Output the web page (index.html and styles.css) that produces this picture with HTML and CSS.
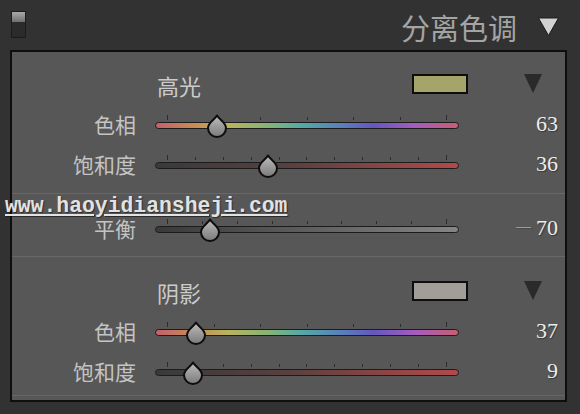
FILE: index.html
```html
<!DOCTYPE html>
<html lang="zh-CN">
<head>
    <meta charset="UTF-8">
    <meta name="viewport" content="width=device-width, initial-scale=1.0">
    <title>分离色调</title>
    <link rel="stylesheet" href="styles.css">
</head>
<body>

<div class="topbar">
    <div class="toggle"></div>
    <div class="title">分离色调</div>
    <svg class="title-arrow" width="23" height="21" viewBox="0 0 23 21"><polygon points="1.5,2 21.5,2 11.5,19.5" /></svg>
</div>

<div class="panel">
    <!-- highlights -->
    <div class="section first">
        <div class="group-head">
            <span class="group-name">高光</span>
            <span class="swatch swatch-high"></span>
            <svg class="group-arrow" width="18" height="19" viewBox="0 0 18 19"><polygon points="0,0 18,0 9,19" /></svg>
        </div>
        <div class="row">
            <div class="label">色相</div>
            <div class="slider">
                <div class="ticks"><i></i><i></i><i></i><i></i><i></i><i></i><i></i></div>
                <div class="track hue">
                    <svg class="knob" style="--v: 0.175" width="26" height="26" viewBox="0 0 26 26"><use href="#drop"/></svg>
                </div>
            </div>
            <div class="value">63</div>
        </div>
        <div class="row">
            <div class="label">饱和度</div>
            <div class="slider">
                <div class="ticks"><i></i><i></i><i></i><i></i><i></i><i></i><i></i><i></i><i></i><i></i><i></i></div>
                <div class="track sat">
                    <svg class="knob" style="--v: 0.36" width="26" height="26" viewBox="0 0 26 26"><use href="#drop"/></svg>
                </div>
            </div>
            <div class="value">36</div>
        </div>
    </div>

    <!-- balance -->
    <div class="section balance">
        <div class="row">
            <div class="label">平衡</div>
            <div class="slider">
                <div class="ticks"><i></i><i></i><i></i><i></i><i></i><i></i><i></i><i></i><i></i></div>
                <div class="track bal">
                    <svg class="knob" style="--v: 0.15" width="26" height="26" viewBox="0 0 26 26"><use href="#drop"/></svg>
                </div>
            </div>
            <div class="value"><span class="minus">—</span>70</div>
        </div>
    </div>

    <!-- shadows -->
    <div class="section last">
        <div class="group-head">
            <span class="group-name">阴影</span>
            <span class="swatch swatch-shadow"></span>
            <svg class="group-arrow" width="18" height="19" viewBox="0 0 18 19"><polygon points="0,0 18,0 9,19" /></svg>
        </div>
        <div class="row">
            <div class="label">色相</div>
            <div class="slider">
                <div class="ticks"><i></i><i></i><i></i><i></i><i></i><i></i><i></i></div>
                <div class="track hue">
                    <svg class="knob" style="--v: 0.1" width="26" height="26" viewBox="0 0 26 26"><use href="#drop"/></svg>
                </div>
            </div>
            <div class="value">37</div>
        </div>
        <div class="row">
            <div class="label">饱和度</div>
            <div class="slider">
                <div class="ticks"><i></i><i></i><i></i><i></i><i></i><i></i><i></i><i></i><i></i><i></i><i></i></div>
                <div class="track sat">
                    <svg class="knob" style="--v: 0.09" width="26" height="26" viewBox="0 0 26 26"><use href="#drop"/></svg>
                </div>
            </div>
            <div class="value">9</div>
        </div>
    </div>
</div>

<!-- watermark over the panel -->
<div class="watermark">www.haoyidiansheji.com</div>

<!-- shared knob shape -->
<svg width="0" height="0" class="defs">
    <defs>
        <linearGradient id="knobFill" x1="0" y1="0" x2="0" y2="1">
            <stop offset="0" stop-color="#bdbdbd"/>
            <stop offset="1" stop-color="#7a7a7a"/>
        </linearGradient>
        <path id="drop" d="M13 1.5 C14.8 5 22 8.5 22 14 A9 9 0 0 1 4 14 C4 8.5 11.2 5 13 1.5 Z"
              fill="url(#knobFill)" stroke="#0d0d0d" stroke-width="2" stroke-linejoin="round"/>
    </defs>
</svg>

</body>
</html>
```

FILE: styles.css
```css
body {
    margin: 0;
    background-color: #323232;
    font-family: "Noto Sans CJK SC", "Noto Sans", sans-serif;
    position: relative;
    height: 414px;
    overflow: hidden;
}

/* top bar */
.topbar {
    height: 50px;
    display: flex;
    align-items: center;
    padding: 0 20px 0 11px;
}
.toggle {
    width: 13px;
    height: 25px;
    border: 1px solid #1c1c1c;
    background: linear-gradient(#a9a9a9 0%, #6f6f6f 40%, #2b2b2b 42%, #2b2b2b 100%);
    margin-top: -1px;
}
.title {
    margin-left: auto;
    font-size: 29px;
    line-height: 34px;
    color: #a4a4a4;
    padding-top: 4px;
}
.title-arrow {
    margin-left: 20px;
    margin-top: 3px;
}
.title-arrow polygon {
    fill: #d2d2d2;
    stroke: #1a1a1a;
    stroke-width: 1;
    stroke-linejoin: round;
}

/* panel */
.panel {
    margin-left: 10px;
    width: 553px;
    border: 2px solid #0e0e0e;
    background-color: #575757;
    padding-bottom: 4px;
}
.section.first {
    padding: 15px 0 8px;
}
.section.balance {
    border-top: 1px solid #686868;
    padding: 15px 0 7px;
}
.section.last {
    border-top: 1px solid #686868;
    border-bottom: 1px solid #666666;
    padding: 17px 0 3px;
}

.group-head {
    height: 38px;
    display: flex;
    align-items: center;
    padding: 0 23px 0 145px;
}
.group-name {
    font-size: 22px;
    color: #cbcbcb;
    line-height: 30px;
    margin-top: -2px;
}
.swatch {
    margin-left: auto;
    width: 52px;
    height: 16px;
    border: 2px solid #0e0e0e;
    margin-top: -4px;
}
.swatch-high { background-color: #a4a46b; }
.swatch-shadow { background-color: #a19e9a; }
.group-arrow {
    margin-left: 56px;
    margin-top: -6px;
}
.group-arrow polygon { fill: #2a2a2a; }

/* slider rows */
.row {
    height: 40px;
    display: grid;
    grid-template-columns: 124px 304px 80px;
    column-gap: 19px;
    align-items: center;
}
.label {
    text-align: right;
    font-size: 21px;
    color: #c4c4c4;
    line-height: 24px;
    margin-top: -2px;
}
.value {
    text-align: right;
    font-family: "Liberation Serif", serif;
    font-size: 22px;
    color: #ededed;
    text-shadow: 1px 1px 1px rgba(0, 0, 0, 0.35);
    margin-left: -19px;
    margin-top: -2px;
}
.minus {
    font-size: 15px;
    color: #cfcfcf;
    margin-right: 5px;
    vertical-align: 4px;
}
.slider {
    display: flex;
    flex-direction: column;
    padding-bottom: 7px;
}
.ticks {
    height: 5px;
    margin: 0 12px 2px;
    display: flex;
    justify-content: space-between;
    align-items: flex-end;
}
.ticks i {
    width: 1px;
    height: 3px;
    background-color: #2c2c2c;
}
.ticks i:first-child,
.ticks i:last-child {
    height: 5px;
}
.track {
    position: relative;
    height: 5px;
    border: 1.5px solid #1c1c1c;
    border-radius: 5px;
}
.track.hue {
    background: linear-gradient(to right,
        #c2606c 0%, #c98a55 12%, #b9b35c 24%, #82b37a 38%,
        #55aaa6 48%, #5a7dbb 62%, #6458c0 72%, #a65cbd 86%, #c75f73 100%);
}
.track.sat {
    background: linear-gradient(to right, #3a3a3a 0%, #5a4040 45%, #b24a4a 100%);
}
.track.bal {
    background: linear-gradient(to right, #393939 0%, #5e5e5e 50%, #858585 100%);
}
.knob {
    position: absolute;
    top: -9px;
    left: calc(12px + var(--v) * (100% - 24px) - 13px);
}

.defs {
    position: absolute;
}

/* watermark */
.watermark {
    position: absolute;
    left: 5px;
    top: 197px;
    font-family: "Liberation Mono", monospace;
    font-weight: bold;
    font-size: 21.4px;
    line-height: 18px;
    color: #e2e2e2;
    text-decoration: underline;
    text-underline-offset: 2px;
    text-shadow: 1px 1px 1px rgba(0, 0, 0, 0.5);
}
```
